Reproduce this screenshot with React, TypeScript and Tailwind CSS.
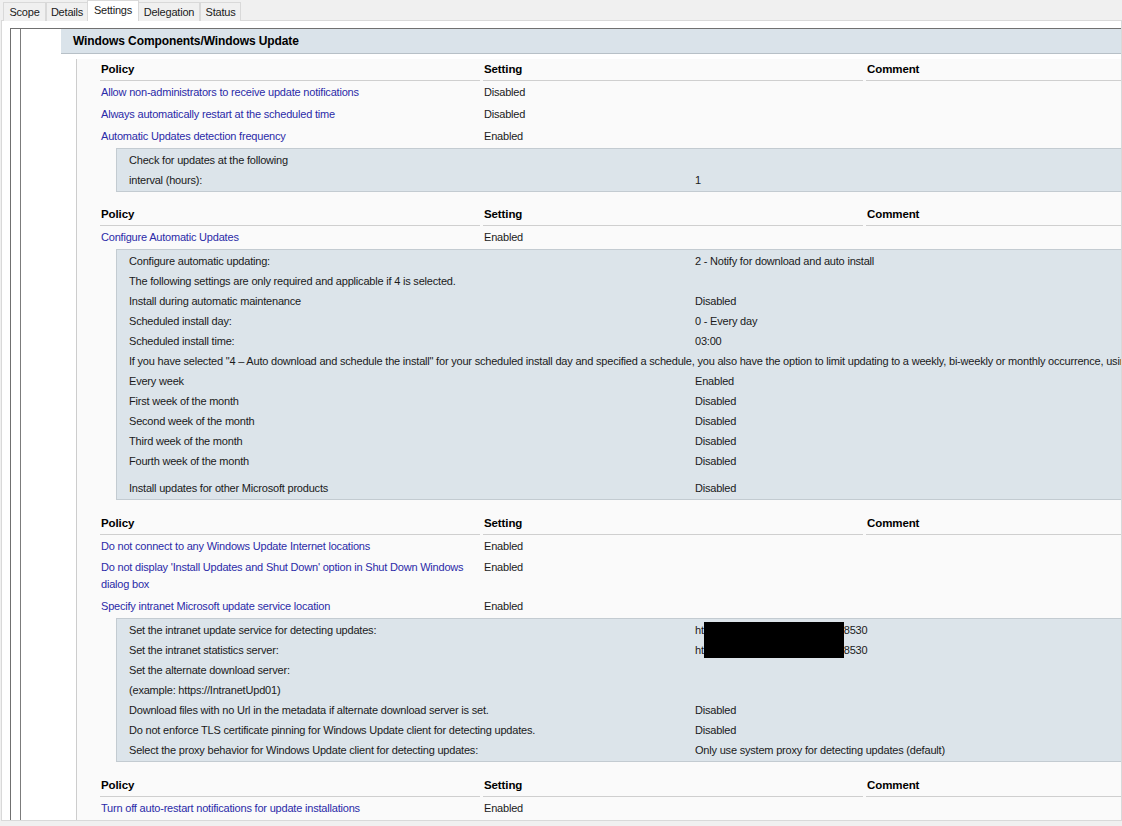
import type { ReactNode } from 'react';

type PolicyRow = { policy: string; setting: string; tall?: boolean };
type DetailRow = { label: string; value?: ReactNode; wide?: boolean; gap?: boolean };

const tabs = [
  { name: 'Scope', w: 'w-[43px]' },
  { name: 'Details', w: 'w-[42px]' },
  { name: 'Settings', w: 'w-[52px]', active: true },
  { name: 'Delegation', w: 'w-[62px]' },
  { name: 'Status', w: 'w-[41px]' },
];

function Redacted({ top }: { top?: boolean }) {
  return (
    <span className="flex items-stretch h-full">
      <span className="self-center">ht</span>
      <span className={`w-[140px] bg-black ${top ? 'mt-[2px]' : 'mb-[2px]'}`} />
      <span className="self-center">8530</span>
    </span>
  );
}

const sections: { rows: PolicyRow[]; details?: DetailRow[]; mt: string }[] = [
  {
    mt: 'mt-[5px]',
    rows: [
      { policy: 'Allow non-administrators to receive update notifications', setting: 'Disabled' },
      { policy: 'Always automatically restart at the scheduled time', setting: 'Disabled' },
      { policy: 'Automatic Updates detection frequency', setting: 'Enabled' },
    ],
    details: [
      { label: 'Check for updates at the following' },
      { label: 'interval (hours):', value: '1' },
    ],
  },
  {
    mt: 'mt-[12px]',
    rows: [{ policy: 'Configure Automatic Updates', setting: 'Enabled' }],
    details: [
      { label: 'Configure automatic updating:', value: '2 - Notify for download and auto install' },
      { label: 'The following settings are only required and applicable if 4 is selected.' },
      { label: 'Install during automatic maintenance', value: 'Disabled' },
      { label: 'Scheduled install day:', value: '0 - Every day' },
      { label: 'Scheduled install time:', value: '03:00' },
      {
        label:
          'If you have selected "4 \u2013 Auto download and schedule the install" for your scheduled install day and specified a schedule, you also have the option to limit updating to a weekly, bi-weekly or monthly occurrence, using the options below:',
        wide: true,
      },
      { label: 'Every week', value: 'Enabled' },
      { label: 'First week of the month', value: 'Disabled' },
      { label: 'Second week of the month', value: 'Disabled' },
      { label: 'Third week of the month', value: 'Disabled' },
      { label: 'Fourth week of the month', value: 'Disabled' },
      { label: 'Install updates for other Microsoft products', value: 'Disabled', gap: true },
    ],
  },
  {
    mt: 'mt-[13px]',
    rows: [
      { policy: 'Do not connect to any Windows Update Internet locations', setting: 'Enabled' },
      {
        policy: "Do not display 'Install Updates and Shut Down' option in Shut Down Windows dialog box",
        setting: 'Enabled',
        tall: true,
      },
      { policy: 'Specify intranet Microsoft update service location', setting: 'Enabled' },
    ],
    details: [
      { label: 'Set the intranet update service for detecting updates:', value: <Redacted top /> },
      { label: 'Set the intranet statistics server:', value: <Redacted /> },
      { label: 'Set the alternate download server:' },
      { label: '(example: https://IntranetUpd01)' },
      { label: 'Download files with no Url in the metadata if alternate download server is set.', value: 'Disabled' },
      { label: 'Do not enforce TLS certificate pinning for Windows Update client for detecting updates.', value: 'Disabled' },
      {
        label: 'Select the proxy behavior for Windows Update client for detecting updates:',
        value: 'Only use system proxy for detecting updates (default)',
      },
    ],
  },
  {
    mt: 'mt-[13px]',
    rows: [{ policy: 'Turn off auto-restart notifications for update installations', setting: 'Enabled' }],
  },
];

function HeaderCell({ label, w }: { label: string; w: string }) {
  return (
    <div className={`${w} shrink-0 pr-[3px]`}>
      <div className="h-[22px] flex items-center pl-[1px] border-b border-[#cfcfcf] font-bold text-[11.5px] tracking-[-0.1px] text-black">
        {label}
      </div>
    </div>
  );
}

function Section({ rows, details, mt }: { rows: PolicyRow[]; details?: DetailRow[]; mt: string }) {
  return (
    <div className={mt}>
      <div className="flex">
        <HeaderCell label="Policy" w="w-[383px]" />
        <HeaderCell label="Setting" w="w-[383px]" />
        <HeaderCell label="Comment" w="w-[420px]" />
      </div>
      {rows.map((r) => (
        <div key={r.policy} className={`flex ${r.tall ? 'py-[2px] leading-[17px]' : 'py-[3px] leading-[16px]'}`}>
          <div className="w-[383px] shrink-0 pl-[1px] pr-[12px] text-[#2a2aa8]">{r.policy}</div>
          <div className="w-[383px] shrink-0 pl-[1px] text-[#1a1a1a]">{r.setting}</div>
        </div>
      ))}
      {details && (
        <div className="mt-[1px] ml-[16px] border border-r-0 border-[#c3cbd1] bg-[#dce4ea] pt-[1px] pb-[1px] text-[#1a1a1a]">
          {details.map((d) => (
            <div key={d.label} className={`flex h-[20px] items-center ${d.gap ? 'mt-[7px]' : ''}`}>
              {d.wide ? (
                <div className="pl-[12px] whitespace-nowrap">{d.label}</div>
              ) : (
                <>
                  <div className="w-[578px] shrink-0 pl-[12px] whitespace-nowrap">{d.label}</div>
                  <div className="h-full flex items-center whitespace-nowrap">{d.value}</div>
                </>
              )}
            </div>
          ))}
        </div>
      )}
    </div>
  );
}

export default function App() {
  return (
    <div className="w-[1122px] h-[826px] overflow-hidden bg-[#f0f0f0] font-['Liberation_Sans',Arial,sans-serif] text-[11px] tracking-[-0.2px]">
      <div className="flex items-end h-[21px] pl-[3px]">
        {tabs.map((t) => (
          <div
            key={t.name}
            className={`${t.w} flex items-center justify-center border border-b-0 border-[#d9d9d9] ${
              t.active ? 'h-[21px] bg-white relative z-10 -mx-px pb-[2px]' : 'h-[19px] bg-[#f0f0f0]'
            } text-[#1a1a1a]`}
          >
            {t.name}
          </div>
        ))}
      </div>
      <div className="-mt-px ml-[1px] h-[801px] border border-[#d9d9d9] bg-white overflow-hidden pt-[7px] pl-[8px]">
        <div className="w-[1400px] h-[900px] border-l border-t border-[#707070]">
          <div className="ml-[9px] h-full border-l border-[#7c7c7c] pl-[40px]">
            <div className="h-[25px] bg-[#dae3ea] border-b border-[#b7c0c7] pl-[12px] flex items-center font-bold text-[12px] tracking-[-0.1px] text-black">
              Windows Components/Windows Update
            </div>
            <div className="ml-[15px] h-full border-l border-[#cdcdcd] bg-[#fafafa] pl-[23px]">
              {sections.map((s, i) => (
                <Section key={i} rows={s.rows} details={s.details} mt={s.mt} />
              ))}
            </div>
          </div>
        </div>
      </div>
    </div>
  );
}
